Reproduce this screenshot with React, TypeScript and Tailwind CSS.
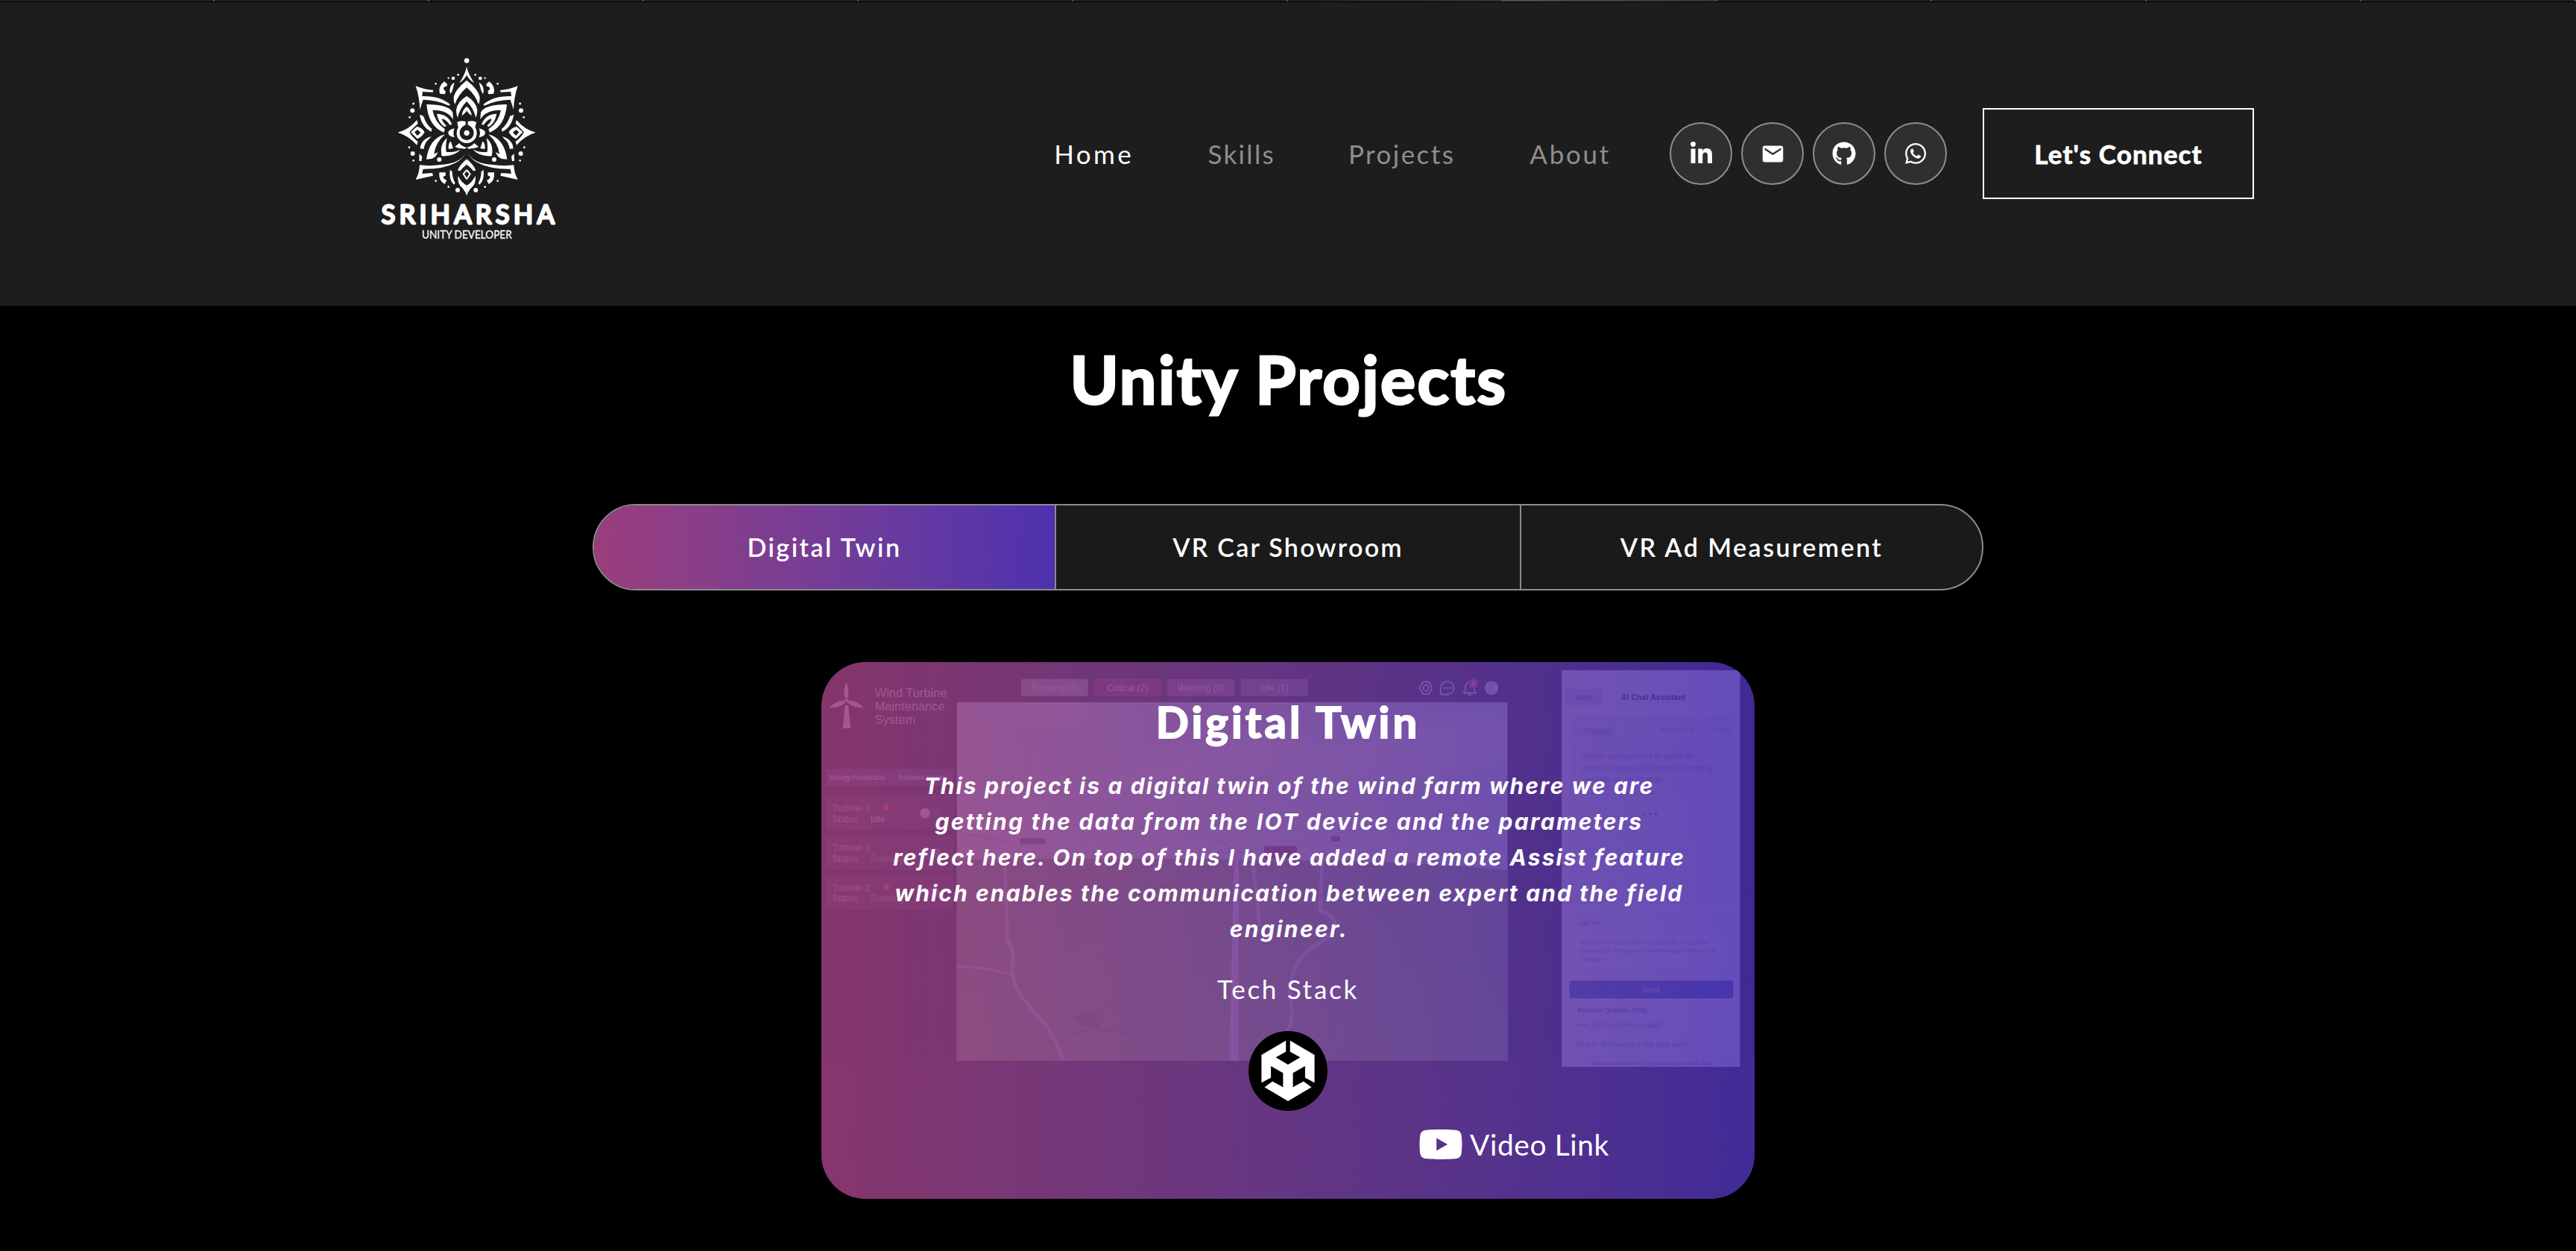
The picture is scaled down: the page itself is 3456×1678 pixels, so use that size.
import { FaYoutube, FaLinkedinIn, FaGithub, FaWhatsapp } from "react-icons/fa";
import { MdEmail } from "react-icons/md";

/* Left half of the mandala emblem, mirrored to form the whole. */
function MandalaHalf() {
  return (
    <g>
      {[
        [404, 121, 4], [384, 135, 7], [365, 134, 3.5], [314, 157, 4], [224, 237, 4.5], [220, 265, 9], [209, 292, 4],
        [207, 413, 4], [221, 438, 9], [224, 466, 4], [314, 548, 4], [365, 572, 4], [402, 585, 9], [328, 462, 9],
      ].map(([x, y, r]) => (
        <circle key={`${x}-${y}`} cx={x} cy={y} r={r} />
      ))}
      <path d="M438.500 88Q432 120 409 153Q427 143 438.500 122Z" />
      <path d="M438.500 143Q392 180 386 210Q385 228 391 240Q402 204 438.500 172Z" />
      <path d="M438.500 206Q400 230 396 262Q396 282 402 294Q410 256 438.500 228Z" />
      <path d="M438.500 248Q420 262 419 286Q430 278 438.500 266Z" />
      <path d="M348 148L360 158L358 168Q346 166 345 178L354 188L351 199L330 197Q322 168 348 148Z" />
      <path d="M389 152Q371 160 370 186L373 198Q380 190 383 176Z" />
      <path d="M233 166Q270 181 304 183L302 191L261 189L259 207Q335 206 372 241L367 245Q320 222 263 221L250 261Q248 210 233 166Z" />
      <path d="M277 240Q366 240 382 272L384 301Q362 262 301 263Q310 312 351 340L346 353Q284 328 277 240Z" />
      <path d="M318 278Q362 278 379 320L371 323Q352 298 338 298Q342 314 357 326L350 331Q324 314 318 278Z" />
      <path d="M249 281L264 287Q276 322 298 338L296 350Q258 332 249 281Z" />
      <path d="M161 353Q205 342 238 303L242 317Q224 333 208 352Q220 374 242 390L238 404Q205 366 161 353Z" />
      <path fillRule="evenodd" d="M213 352L238 329Q262 336 269 352Q260 370 240 379ZM228 352L240 366L253 353L240 342Z" />
      <path d="M251 418Q254 380 296 369L286 380Q268 394 266 419Z" />
      <path d="M351 361Q288 376 276 461L298 459Q316 452 322 432L307 440Q312 395 351 361Z" />
      <path d="M359 376Q328 402 338 448Q392 450 414 421L398 428Q376 434 356 431Q352 410 359 376Z" />
      <path d="M374 388Q362 402 366 420L384 417Z" />
      <path d="M389 337Q364 342 364 355Q364 368 389 373Q381 355 389 337Z" />
      <path d="M422 322Q404 334 404 356A34.500 34.500 0 0 0 438.500 390" fill="none" stroke="white" strokeWidth="12" />
      <path d="M400 312Q412 303 434 309L434 322Q422 332 404 331Z" />
      <path d="M391 410L408 396Q420 410 438.500 414L430 419L400 415Z" />
      <path d="M434 431Q422 470 356 481Q292 490 249 484Q248 516 233 543L303 527L300 516L259 519L263 500Q344 501 390 477Q428 458 434 431Z" />
      <path d="M248 438L259 450L256 469L247 467Z" />
      <path d="M438.500 607Q432 586 412 568Q400 550 404 528Q418 556 438.500 566Z" />
      <path d="M438.500 460Q410 484 402 506L412 508Q424 492 438.500 482Z" />
      <path d="M438.500 504L425 520L438.500 541" fill="none" stroke="white" strokeWidth="6" />
      <path d="M371 503L380 511Q380 535 392 557L387 563Q366 545 371 503Z" />
      <path d="M328 514L354 514L353 527L344 530Q345 542 358 545L350 561Q324 548 328 514Z" />
    </g>
  );
}

function Logo() {
  return (
    <svg viewBox="0 0 900 840" className="mt-[57px] h-[280px] w-[300px] self-start" fill="white">
      <circle cx="438.500" cy="64" r="10" />
      <circle cx="438.500" cy="355" r="11" />
      <MandalaHalf />
      <g transform="translate(877 0) scale(-1 1)">
        <MandalaHalf />
      </g>
      <text x="95" y="719" fontFamily="Lato, sans-serif" fontWeight="400" fontSize="102" textLength="696" stroke="white" strokeWidth="9" strokeLinejoin="round">
        SRIHARSHA
      </text>
      <text x="258" y="780" fontFamily="Lato, sans-serif" fontSize="45" textLength="362" lengthAdjust="spacingAndGlyphs" stroke="white" strokeWidth="0.8">
        UNITY DEVELOPER
      </text>
    </svg>
  );
}

const socials = [
  { name: "LinkedIn", icon: <FaLinkedinIn className="size-[33px]" /> },
  { name: "Email", icon: <MdEmail className="size-[33px]" /> },
  { name: "GitHub", icon: <FaGithub className="size-8" /> },
  { name: "WhatsApp", icon: <FaWhatsapp className="size-8" /> },
];

function Header() {
  return (
    <header className="flex h-[407px] items-center bg-[#1d1d1d] pr-[432px] pb-px pl-[480px]">
      <Logo />
      <nav className="ml-auto flex items-center text-[35px] leading-none text-[#8e8e8e]">
        <a className="tracking-[3.4px] text-white">Home</a>
        <a className="ml-[99.5px] tracking-[2.3px]">Skills</a>
        <a className="ml-[98px] tracking-[2.45px]">Projects</a>
        <a className="ml-[100px] tracking-[2.7px]">About</a>
      </nav>
      <div className="ml-[79px] flex gap-3">
        {socials.map((s) => (
          <a key={s.name} aria-label={s.name} className="flex size-[84px] items-center justify-center rounded-full border-2 border-[#8e8e8e] bg-[#2f2f2f] text-white">
            {s.icon}
          </a>
        ))}
      </div>
      <button className="ml-12 flex h-[122px] w-[364px] items-center justify-center border-2 border-white text-[35px] leading-none font-bold tracking-[1.13px] text-white [-webkit-text-stroke:0.8px_white]">
        Let's Connect
      </button>
    </header>
  );
}

function TopStrip() {
  return (
    <div className="flex h-[3px] border-b border-black bg-[#1f1f1f]">
      {Array.from({ length: 12 }, (_, i) => (
        <div
          key={i}
          className={
            "w-[288px] border-r-2 border-[#555] " +
            (i === 6 ? "bg-linear-to-r from-[#1f1f1f] to-[#343234]" : i === 7 ? "bg-linear-to-r from-[#554c50] to-[#363636]" : "")
          }
        />
      ))}
    </div>
  );
}

function Tabs() {
  return (
    <div className="mx-auto flex h-[116px] w-[1866px] overflow-hidden rounded-full border-2 border-[#8c8c8a] bg-[#1a1a1a] text-[34px] leading-none font-semibold text-white">
      <div className="flex w-[620px] items-center justify-center border-r-2 border-[#8c8c8a] bg-linear-to-r from-[#9b3d7c] to-[#4e30af] tracking-[2.5px]">
        Digital Twin
      </div>
      <div className="flex w-[624px] items-center justify-center border-r-2 border-[#8c8c8a] tracking-[2.25px]">VR Car Showroom</div>
      <div className="flex flex-1 items-center justify-center tracking-[2.45px]">VR Ad Measurement</div>
    </div>
  );
}

const chips = [
  { x: 268, w: 89.5, label: "Running (2)", fill: "#7f9e8a" },
  { x: 365.6, w: 90.6, label: "Critical (2)", fill: "#701c38" },
  { x: 464.3, w: 89.8, label: "Warning (0)", fill: "#7a5068" },
  { x: 562.7, w: 89.8, label: "Idle (1)", fill: "#6a5c80" },
];

const turbines = [
  { y: 178.7, name: "Turbine-3", status: "Idle", alert: true, on: false },
  { y: 232, name: "Turbine-1", status: "Running", alert: false, on: true },
  { y: 285.3, name: "Turbine-2", status: "Running", alert: true, on: true },
];

/* The wind-farm dashboard shown behind the tinted card. */
function DashboardPreview() {
  return (
    <svg viewBox="0 0 1252 720" className="absolute inset-0 h-[720px] w-[1252px]" fontFamily="Liberation Sans, sans-serif">
      <defs>
        <linearGradient id="sky" x1="0" y1="0" x2="0" y2="1">
          <stop offset="0" stopColor="#b9d2ea" />
          <stop offset="1" stopColor="#dfe6f2" />
        </linearGradient>
        <linearGradient id="ground" x1="0" y1="0" x2="0" y2="1">
          <stop offset="0" stopColor="#6f9070" />
          <stop offset="1" stopColor="#7f9f68" />
        </linearGradient>
        <filter id="cloud" x="-20%" y="-50%" width="140%" height="200%">
          <feGaussianBlur stdDeviation="9" />
        </filter>
        <clipPath id="scene">
          <rect x="181.5" y="53.7" width="739.2" height="481" />
        </clipPath>
      </defs>
      <rect width="1252" height="534" fill="#08080c" />
      <rect y="534" width="1252" height="186" fill="#121014" />

      <g fill="#ffffff" fillOpacity="0.9">
        <path d="M33.500 27Q38 38 35.500 48L31.500 48Q29 38 33.500 27Z" />
        <path d="M10.500 61.500Q18 52 31 51.500L32 55Q22 62 10.500 61.500Z" />
        <path d="M57 61.500Q49 52 36 51.500L35 55Q45 62 57 61.500Z" />
        <path d="M31.500 58H36L39.400 89H28.800Z" />
        <circle cx="33.700" cy="51.300" r="2.500" />
      </g>
      <g fill="#ffffff" fillOpacity="0.9" fontSize="16.400">
        <text x="71.700" y="47">Wind Turbine</text>
        <text x="71.700" y="64.700">Maintenance</text>
        <text x="71.700" y="82.500">System</text>
      </g>

      {chips.map((c) => (
        <g key={c.label}>
          <rect x={c.x} y="23" width={c.w} height="22.500" rx="2.500" fill={c.fill} stroke="#ffffff" strokeOpacity="0.15" />
          <text x={c.x + c.w / 2} y="39" fontSize="12" fill="#f0e8f0" textAnchor="middle">
            {c.label}
          </text>
        </g>
      ))}

      <g fill="none" stroke="#e8e8ff" strokeWidth="1.800">
        <path d="M807 26.500H815L816.500 29.500L819.500 34.700L816.500 40L815 43H807L805.500 40L802 34.700L805.500 29.500Z" strokeLinejoin="round" />
        <circle cx="811" cy="34.700" r="3.800" />
        <path d="M830.800 43.500V34.700A9 8.700 0 1 1 839.800 43.500Z" strokeLinejoin="round" />
        <path d="M861.500 41.500Q864 39 864 33Q865 26.500 869.800 26.500Q874.500 26.500 875.500 33Q875.500 39 878 41.500Z" strokeLinejoin="round" />
      </g>
      <g fill="#f0f0ff">
        <circle cx="836" cy="34.700" r="1.300" />
        <circle cx="840" cy="34.700" r="1.300" />
        <circle cx="844" cy="34.700" r="1.300" />
        <circle cx="869.800" cy="43.500" r="1.800" />
        <circle cx="899" cy="34.700" r="9.200" />
      </g>
      <circle cx="899" cy="32" r="2.600" fill="none" stroke="#9a9ab8" />
      <path d="M894.500 40.500Q899 33 903.500 40.500Z" fill="none" stroke="#9a9ab8" />
      <circle cx="874.500" cy="28.700" r="7" fill="#d8204c" />
      <text x="874.500" y="32.400" fontSize="9.500" fontWeight="700" fill="#ffffff" textAnchor="middle">3</text>

      <rect x="5.500" y="143.300" width="171.500" height="23" fill="#2c3464" />
      <text x="10.400" y="158" fontSize="9.200" fontWeight="700" fill="#d0d0e0" textLength="75">Energy Production</text>
      <text x="102.300" y="158" fontSize="9.200" fontWeight="700" fill="#d0d0e0" textLength="64">Turbines Status</text>
      {turbines.map((t) => (
        <g key={t.name}>
          <rect x="5.500" y={t.y} width="171.500" height="47.300" fill="#2a2432" />
          <g fontSize="12" fill="#c8c0d0">
            <text x="14.500" y={t.y + 21.300}>{t.name}</text>
            <text x="14.500" y={t.y + 36}>Status:</text>
            <text x="66" y={t.y + 36} fill={t.on ? "#7fa98a" : "#ffffff"}>{t.status}</text>
          </g>
          {t.alert && <circle cx="87.200" cy={t.y + 16.500} r="5.500" fill="#b01c3c" />}
          {t.alert && <rect x="86.500" y={t.y + 13.500} width="1.500" height="6" fill="#ffffff" />}
          <rect x="132" y={t.y + 17} width="28" height="14" rx="7" fill={t.on ? "#4046a8" : "#3a3468"} />
          <circle cx={t.on ? 153 : 139} cy={t.y + 24} r="6.500" fill={t.on ? "#6a60b0" : "#e8e8f4"} />
        </g>
      ))}

      <g clipPath="url(#scene)">
        <rect x="181.500" y="53.700" width="739.200" height="481" fill="url(#sky)" />
        <g fill="#eef0f8" fillOpacity="0.6" filter="url(#cloud)">
          <path d="M260 54L370 54L350 80L310 88L270 74Z" />
          <path d="M380 165Q430 130 470 128Q520 90 560 98Q620 90 660 110Q740 90 830 76L921 70V130Q860 140 820 160Q760 150 700 170Q600 140 520 160Q440 165 380 165Z" />
        </g>
        <path d="M181 265Q420 262 640 266Q780 266 921 279V535H181Z" fill="url(#ground)" />
        <g fill="none" stroke="#e8c8ec" strokeOpacity="0.75" strokeLinecap="round">
          <path d="M245 240L249 352" strokeWidth="4" />
          <path d="M249 352V372Q259 388 257 400Q253 422 266 445Q278 462 290 474Q308 494 314 509L325 536" strokeWidth="5" />
          <path d="M181 408Q230 410 256 420" strokeWidth="3" />
          <path d="M578 262L588 352" strokeWidth="5" />
          <path d="M673 237L669 334" strokeWidth="5" />
          <path d="M669 334Q692 340 688 354Q684 370 660 382Q632 402 628 440Q634 476 628 490Q612 510 612 536" strokeWidth="5" />
        </g>
        <path d="M554 255H560L559.500 535H547Z" fill="#dcc8f4" />
        <g fill="none" stroke="#8a98b8" strokeWidth="1.300">
          <path d="M506 225L567 257M531 255H572" />
          <path d="M192 230L247 241" />
          <path d="M640 215L673 237L722 222" strokeOpacity="0.5" />
        </g>
        <path d="M270 520L363 492L400 496L506 532M380 455L372 492" fill="none" stroke="#4f6a58" strokeOpacity="0.55" strokeWidth="2" />
        <path d="M336 478Q352 466 368 474L374 490H360Z" fill="#5f7a60" />
        <rect x="266.800" y="236" width="33.500" height="8.500" rx="1.500" fill="#6a5a90" />
        <rect x="594" y="247" width="44" height="17" rx="2" fill="#802040" />
        <rect x="684" y="234" width="12" height="6.500" rx="1" fill="#703060" />
      </g>

      <rect x="993.300" y="11" width="239.200" height="532" fill="#f4f2ff" />
      <rect x="1004.700" y="72" width="218.300" height="254" rx="3" fill="#e4e2f6" stroke="#d8d6f0" />
      <rect x="999" y="35.700" width="49" height="22" fill="#d0cce8" />
      <text x="1012.500" y="50.600" fontSize="8.500" fill="#444444" textLength="22">BACK</text>
      <text x="1073" y="50.600" fontSize="10.500" fontWeight="700" fill="#111122" textLength="86.500">AI Chat Assistant</text>
      <text x="1126" y="92" fontSize="7.500" fontFamily="Liberation Mono, monospace" fill="#8888a0" textLength="92.500">processing | 7.1/2.8s</text>
      <rect x="1007.600" y="86" width="56" height="16" rx="2" fill="#d4d4f4" />
      <text x="1023" y="97" fontSize="10" fill="#6a6ab0" textLength="36">Chatbot</text>
      <rect x="1011" y="108.700" width="205" height="68.500" rx="8" fill="#dfdcf6" stroke="#cfcdea" />
      <g fontSize="10.500" fill="#8a88b0">
        <text x="1021" y="130" textLength="157">Which components or parts do I</text>
        <text x="1021" y="145.700" textLength="177">need to remove or loosen in order to</text>
        <text x="1021" y="161.300" textLength="108">perform an oil change</text>
      </g>
      <g fill="#505080">
        <circle cx="1103.500" cy="204" r="1.600" />
        <circle cx="1111.700" cy="204" r="1.600" />
        <circle cx="1119.800" cy="204" r="1.600" />
      </g>
      <rect x="1004.700" y="335" width="218.300" height="84" rx="3" fill="#ebe9fb" />
      <text x="1014.500" y="352.700" fontSize="9.500" fill="#7a78a8">Ask Me:</text>
      <rect x="1009.600" y="363.700" width="207" height="47.300" rx="3" fill="#f6f4ff" stroke="#dcdaf2" />
      <g fontSize="9.300" fill="#9a98bc">
        <text x="1017" y="378.700" textLength="173">Which components or parts do I need to</text>
        <text x="1017" y="390.300" textLength="182">remove or loosen in order to perform an oil</text>
        <text x="1017" y="402">change</text>
      </g>
      <rect x="1003.500" y="427.300" width="219.700" height="24" rx="3.500" fill="#2f54b0" />
      <text x="1113" y="442.800" fontSize="10" fontWeight="700" fill="#b0b8e8" textAnchor="middle">Send</text>
      <text x="1014.500" y="470" fontSize="9.500" fontWeight="700" fill="#7a78a8" textLength="94">Popular Queries [EN]:</text>
      <g fill="#efedfd" stroke="#e0def4">
        <rect x="1007.600" y="478.700" width="126.500" height="17" rx="3" />
        <rect x="1007.600" y="504.300" width="160" height="17" rx="3" />
        <path d="M1007.600 543V529H1220.700V543" />
      </g>
      <g fontSize="9.300" fill="#8583aa">
        <text x="1011.700" y="490" textLength="117">How do I fix a broken plate?</text>
        <text x="1011.700" y="515.700" textLength="151">Why is oil foaming in the gear unit?</text>
        <text x="1031.700" y="540.700" textLength="163">What versions of gear output shaft are</text>
      </g>
    </svg>
  );
}

function UnityIcon() {
  return (
    <svg viewBox="0 0 106 107" className="h-[107px] w-[106px]">
      <ellipse cx="53" cy="53.500" rx="53" ry="53.500" fill="black" />
      <path
        fill="white"
        d="M50.200 12.700L17.400 32V69.300L30.100 62.500V47L46.400 56.300V75.300L32.100 67.500L21.500 75.300L53 94L84.500 75.300L73.900 67.500L59.600 75.300V56.300L75.900 47V62.500L88.600 69.300V32L55.800 12.700V27.700L69.400 35.300L53 44.900L36.600 35.300L50.200 27.700Z"
      />
    </svg>
  );
}

function ProjectCard() {
  return (
    <article className="relative mx-auto h-[720px] w-[1252px] overflow-hidden rounded-[59px] text-white">
      <DashboardPreview />
      <div className="absolute inset-0 bg-linear-to-r from-[#9b3d7c] to-[#4a2fae] opacity-85" />
      <div className="relative flex h-full flex-col items-center">
        <h2 className="mt-[50px] text-[58px] leading-[60px] font-bold tracking-[4.1px] [-webkit-text-stroke:2px_white]">Digital Twin</h2>
        <p className="mt-[32px] pl-[3px] text-center font-['Inter'] text-[30px] leading-[48px] font-bold whitespace-nowrap italic">
          <span className="block tracking-[2.1px]">This project is a digital twin of the wind farm where we are</span>
          <span className="block tracking-[2.32px]">getting the data from the IOT device and the parameters</span>
          <span className="block tracking-[2.1px]">reflect here. On top of this I have added a remote Assist feature</span>
          <span className="block tracking-[2.12px]">which enables the communication between expert and the field</span>
          <span className="block tracking-[2.4px]">engineer.</span>
        </p>
        <p className="mt-[36px] text-[35px] leading-[40px] tracking-[2.71px]">Tech Stack</p>
        <div className="mt-[37px]">
          <UnityIcon />
        </div>
        <a className="mt-[15px] mr-[195px] flex items-center self-end text-[39px] leading-[60px] tracking-[0.57px]">
          <FaYoutube className="mr-[9px] size-[60px]" />
          Video Link
        </a>
      </div>
    </article>
  );
}

export default function App() {
  return (
    <div className="h-[1678px] w-[3456px] overflow-hidden bg-black font-['Lato',sans-serif]">
      <TopStrip />
      <Header />
      <main className="flex flex-col">
        <h1 className="mt-12 pl-[2px] text-center text-[88px] leading-[100px] font-bold tracking-[2.4px] text-white [-webkit-text-stroke:3px_white]">Unity Projects</h1>
        <div className="mt-[118px]">
          <Tabs />
        </div>
        <div className="mt-24">
          <ProjectCard />
        </div>
      </main>
    </div>
  );
}
